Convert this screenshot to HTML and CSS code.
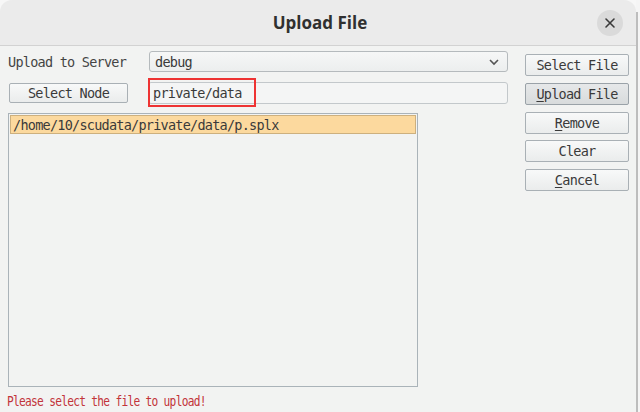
FILE: index.html
```html
<!DOCTYPE html>
<html>
<head>
<meta charset="utf-8">
<link rel="stylesheet" href="styles.css">
</head>
<body>
<div class="desk">
  <div class="dialog">
    <div class="titlebar">
      <div class="title">Upload File</div>
      <div class="close"><svg width="12" height="12" viewBox="0 0 12 12"><path d="M2 2L10 10M10 2L2 10" stroke="#3a3a3a" stroke-width="1.6" stroke-linecap="round"/></svg></div>
    </div>
    <div class="content">
      <div class="main">
        <div class="row row1">
          <div class="label">Upload to Server</div>
          <div class="combo"><span class="mono">debug</span>
            <svg class="chev" width="12" height="8" viewBox="0 0 12 8"><path d="M2 2L6 6L10 2" fill="none" stroke="#555" stroke-width="1.6"/></svg>
          </div>
        </div>
        <div class="row row2">
          <div class="btn node">Select Node</div>
          <div class="fieldwrap">
            <div class="field mono">private/data</div>
            <div class="mark"></div>
          </div>
        </div>
        <div class="list">
          <div class="item mono">/home/10/scudata/private/data/p.splx</div>
        </div>
        <div class="status"><span class="stext">Please select the file to upload!</span></div>
      </div>
      <div class="side">
        <div class="btn">Select File</div>
        <div class="btn pressed"><u>U</u>pload File</div>
        <div class="btn"><u>R</u>emove</div>
        <div class="btn">Clear</div>
        <div class="btn"><u>C</u>ancel</div>
      </div>
    </div>
  </div>
  <div class="behind">
    <div class="bline"></div>
  </div>
</div>
</body>
</html>
```
FILE: styles.css
```css
html, body {
  margin: 0;
  padding: 0;
  width: 640px;
  height: 412px;
  overflow: hidden;
  background: #f7f7f7;
}
.desk {
  display: flex;
  width: 640px;
  height: 412px;
}
.dialog {
  width: 636px;
  height: 412px;
  background: #f2f3f2;
  border-radius: 12px 12px 0 0;
  overflow: hidden;
  display: flex;
  flex-direction: column;
}
.titlebar {
  height: 45px;
  flex: none;
  background: #ebebeb;
  border-bottom: 1px solid #d2d2d2;
  display: flex;
  align-items: center;
  justify-content: center;
  position: relative;
}
.title {
  font-family: "Open Sans", "Noto Sans", sans-serif;
  font-weight: 700;
  font-size: 17px;
  color: #303030;
  margin-left: 4px;
}
.close {
  position: absolute;
  right: 13px;
  top: 10px;
  width: 26px;
  height: 26px;
  border-radius: 50%;
  background: #dadada;
  display: flex;
  align-items: center;
  justify-content: center;
}
.content {
  display: flex;
  padding: 5px 0 0 8px;
  gap: 17px;
  font-family: "DejaVu Sans Mono", monospace;
  font-size: 13.5px;
  letter-spacing: -0.75px;
  color: #3a3a3a;
}
.main {
  width: 500px;
  display: flex;
  flex-direction: column;
}
.row {
  display: flex;
  align-items: center;
}
.row1 {
  height: 21px;
}
.label {
  width: 141px;
  color: #444;
}
.combo {
  flex: 1;
  height: 19px;
  border: 1px solid #b5babd;
  border-radius: 3px;
  background: linear-gradient(#f6f7f7, #eceeee);
  display: flex;
  align-items: center;
  padding-left: 5px;
  justify-content: space-between;
}
.chev {
  margin-right: 7px;
}
.row2 {
  margin-top: 10px;
  height: 22px;
}
.btn {
  height: 20px;
  border: 1px solid #a9b0b5;
  border-radius: 2px;
  background: linear-gradient(#f8f9f9, #eaecec);
  display: flex;
  align-items: center;
  justify-content: center;
  color: #3a3a3a;
  box-sizing: content-box;
}
.node {
  width: 117px;
  height: 18px;
  margin-left: 1px;
  margin-right: 20px;
}
.fieldwrap {
  flex: 1;
  position: relative;
}
.field {
  height: 20px;
  border: 1px solid #c3c8cb;
  border-radius: 3px;
  background: #f4f5f5;
  display: flex;
  align-items: center;
  padding-left: 4px;
}
.mark {
  position: absolute;
  left: 0;
  top: -4px;
  width: 104px;
  height: 25px;
  border: 2px solid #ee3333;
}
.list {
  margin-top: 9px;
  width: 406px;
  height: 270px;
  border: 1px solid #aab3b9;
  background: #f2f3f2;
  padding: 1px;
}
.item {
  height: 17px;
  background: #fcd99e;
  border: 1px solid #cdb07e;
  display: flex;
  align-items: center;
  padding-left: 2px;
}
.status {
  margin-top: 6px;
  margin-left: -1px;
  color: #c2343a;
  font-size: 14px;
  letter-spacing: -0.9px;
  white-space: nowrap;
}
.stext {
  display: inline-block;
  transform: scaleX(0.8);
  transform-origin: left center;
}
.side {
  width: 104px;
  display: flex;
  flex-direction: column;
  gap: 6.8px;
  padding-top: 3px;
}
.side .btn {
  width: 102px;
}
.side .pressed {
  background: linear-gradient(#e6e8e9, #d8dbdc);
  border-color: #9aa2a8;
}
u {
  text-decoration: underline;
  text-underline-offset: 2px;
}
.behind {
  width: 4px;
  height: 412px;
  background: #f5f5f5;
  display: flex;
}
.bline {
  width: 2px;
  margin-top: 12px;
  background: #bdbdbd;
}
```
